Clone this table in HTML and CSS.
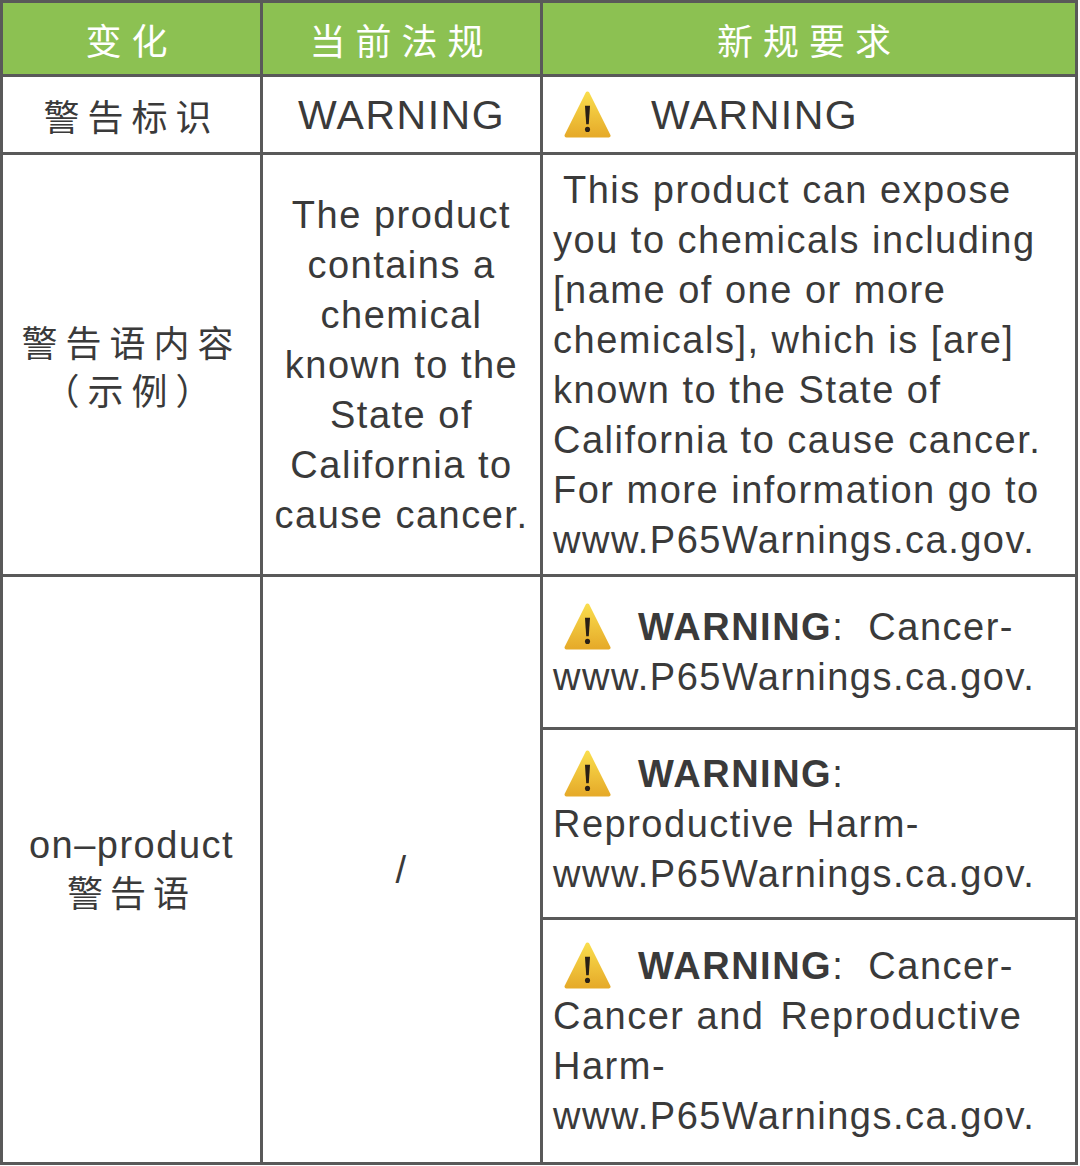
FILE: index.html
```html
<!DOCTYPE html>
<html lang="zh-CN">
<head>
<meta charset="utf-8">
<title>Prop 65</title>
<link rel="stylesheet" href="styles.css">
</head>
<body>
<div class="table">
  <div class="cell head"><div>变化</div></div>
  <div class="cell head"><div>当前法规</div></div>
  <div class="cell head"><div>新规要求</div></div>

  <div class="cell cn"><div>警告标识</div></div>
  <div class="cell big"><div>WARNING</div></div>
  <div class="cell left big">
    <div class="line">
      <svg class="icon icon-top" viewBox="0 0 48 50" width="47" height="49"><defs><linearGradient id="g1" x1="0" y1="0" x2="0" y2="1"><stop offset="0" stop-color="#f9dc4c"/><stop offset="1" stop-color="#e6ab2a"/></linearGradient></defs><path d="M24 3.5 L45.5 46.5 L2.5 46.5 Z" fill="url(#g1)" stroke="url(#g1)" stroke-width="4" stroke-linejoin="round"/><path d="M21.4 16 h5.2 l-1.3 19 h-2.6 z" fill="#2a2016"/><circle cx="24" cy="40.2" r="2.6" fill="#2a2016"/></svg><span>WARNING</span>
    </div>
  </div>

  <div class="cell cn"><div>警告语内容<br><span class="paren">（示例）</span></div></div>
  <div class="cell"><div>The product<br>contains a<br>chemical<br>known to the<br>State of<br>California to<br>cause cancer.</div></div>
  <div class="cell left"><div><span class="indent">This product can expose</span><br>you to chemicals including<br>[name of one or more<br>chemicals], which is [are]<br>known to the State of<br>California to cause cancer.<br>For more information go to<br>www.P65Warnings.ca.gov.</div></div>

  <div class="cell mixed"><div><span class="lat">on–product</span><br><span class="cjk">警告语</span></div></div>
  <div class="cell"><div>/</div></div>
  <div class="stack">
    <div class="cell left">
      <div><svg class="icon" viewBox="0 0 48 50" width="47" height="49"><defs><linearGradient id="g2" x1="0" y1="0" x2="0" y2="1"><stop offset="0" stop-color="#f9dc4c"/><stop offset="1" stop-color="#e6ab2a"/></linearGradient></defs><path d="M24 3.5 L45.5 46.5 L2.5 46.5 Z" fill="url(#g2)" stroke="url(#g2)" stroke-width="4" stroke-linejoin="round"/><path d="M21.4 16 h5.2 l-1.3 19 h-2.6 z" fill="#2a2016"/><circle cx="24" cy="40.2" r="2.6" fill="#2a2016"/></svg><b>WARNING</b>:&nbsp; Cancer-<br>www.P65Warnings.ca.gov.</div>
    </div>
    <div class="cell left">
      <div><svg class="icon" viewBox="0 0 48 50" width="47" height="49"><defs><linearGradient id="g3" x1="0" y1="0" x2="0" y2="1"><stop offset="0" stop-color="#f9dc4c"/><stop offset="1" stop-color="#e6ab2a"/></linearGradient></defs><path d="M24 3.5 L45.5 46.5 L2.5 46.5 Z" fill="url(#g3)" stroke="url(#g3)" stroke-width="4" stroke-linejoin="round"/><path d="M21.4 16 h5.2 l-1.3 19 h-2.6 z" fill="#2a2016"/><circle cx="24" cy="40.2" r="2.6" fill="#2a2016"/></svg><b>WARNING</b>:<br>Reproductive Harm-<br>www.P65Warnings.ca.gov.</div>
    </div>
    <div class="cell left">
      <div><svg class="icon" viewBox="0 0 48 50" width="47" height="49"><defs><linearGradient id="g4" x1="0" y1="0" x2="0" y2="1"><stop offset="0" stop-color="#f9dc4c"/><stop offset="1" stop-color="#e6ab2a"/></linearGradient></defs><path d="M24 3.5 L45.5 46.5 L2.5 46.5 Z" fill="url(#g4)" stroke="url(#g4)" stroke-width="4" stroke-linejoin="round"/><path d="M21.4 16 h5.2 l-1.3 19 h-2.6 z" fill="#2a2016"/><circle cx="24" cy="40.2" r="2.6" fill="#2a2016"/></svg><b>WARNING</b>:&nbsp; Cancer-<br>Cancer and <span class="gap">Reproductive</span><br>Harm-<br>www.P65Warnings.ca.gov.</div>
    </div>
  </div>
</div>
</body>
</html>
```

FILE: styles.css
```css
html, body {
  margin: 0;
  padding: 0;
  background: #ffffff;
}

body {
  color: #3a3a3a;
  font-family: "Liberation Sans", "Noto Sans CJK SC", sans-serif;
}

.table {
  display: grid;
  grid-template-columns: 257px 277px 532px;
  grid-template-rows: 71px 75px 419px 585px;
  gap: 3px;
  padding: 3px;
  background: #595959;
  width: max-content;
}

.cell {
  background: #ffffff;
  display: flex;
  align-items: center;
  justify-content: center;
  text-align: center;
  font-size: 38px;
  line-height: 50px;
  letter-spacing: 1.5px;
  white-space: nowrap;
}

.head {
  background: #8cc152;
  color: #ffffff;
  font-family: "Noto Sans CJK SC", sans-serif;
  font-size: 36px;
  letter-spacing: 10px;
  line-height: 48px;
}

.cn {
  font-family: "Noto Sans CJK SC", sans-serif;
  font-size: 36px;
  letter-spacing: 8px;
  line-height: 48px;
}

.mixed {
  line-height: 46px;
}

.mixed .cjk {
  font-family: "Noto Sans CJK SC", sans-serif;
  font-size: 36px;
  letter-spacing: 7px;
}

.big {
  font-size: 41px;
}

.left {
  justify-content: flex-start;
  text-align: left;
  padding-left: 10px;
}

.indent {
  padding-left: 10px;
}

.gap {
  margin-left: 4px;
}

.stack {
  display: grid;
  grid-template-rows: 150px 187px 1fr;
  gap: 3px;
}

.icon {
  display: inline-block;
  vertical-align: -11px;
  margin-left: 11px;
  margin-right: 27px;
}

.icon-top {
  margin-right: 40px;
}

.line {
  display: flex;
  align-items: center;
}

b {
  font-weight: 700;
}
```
